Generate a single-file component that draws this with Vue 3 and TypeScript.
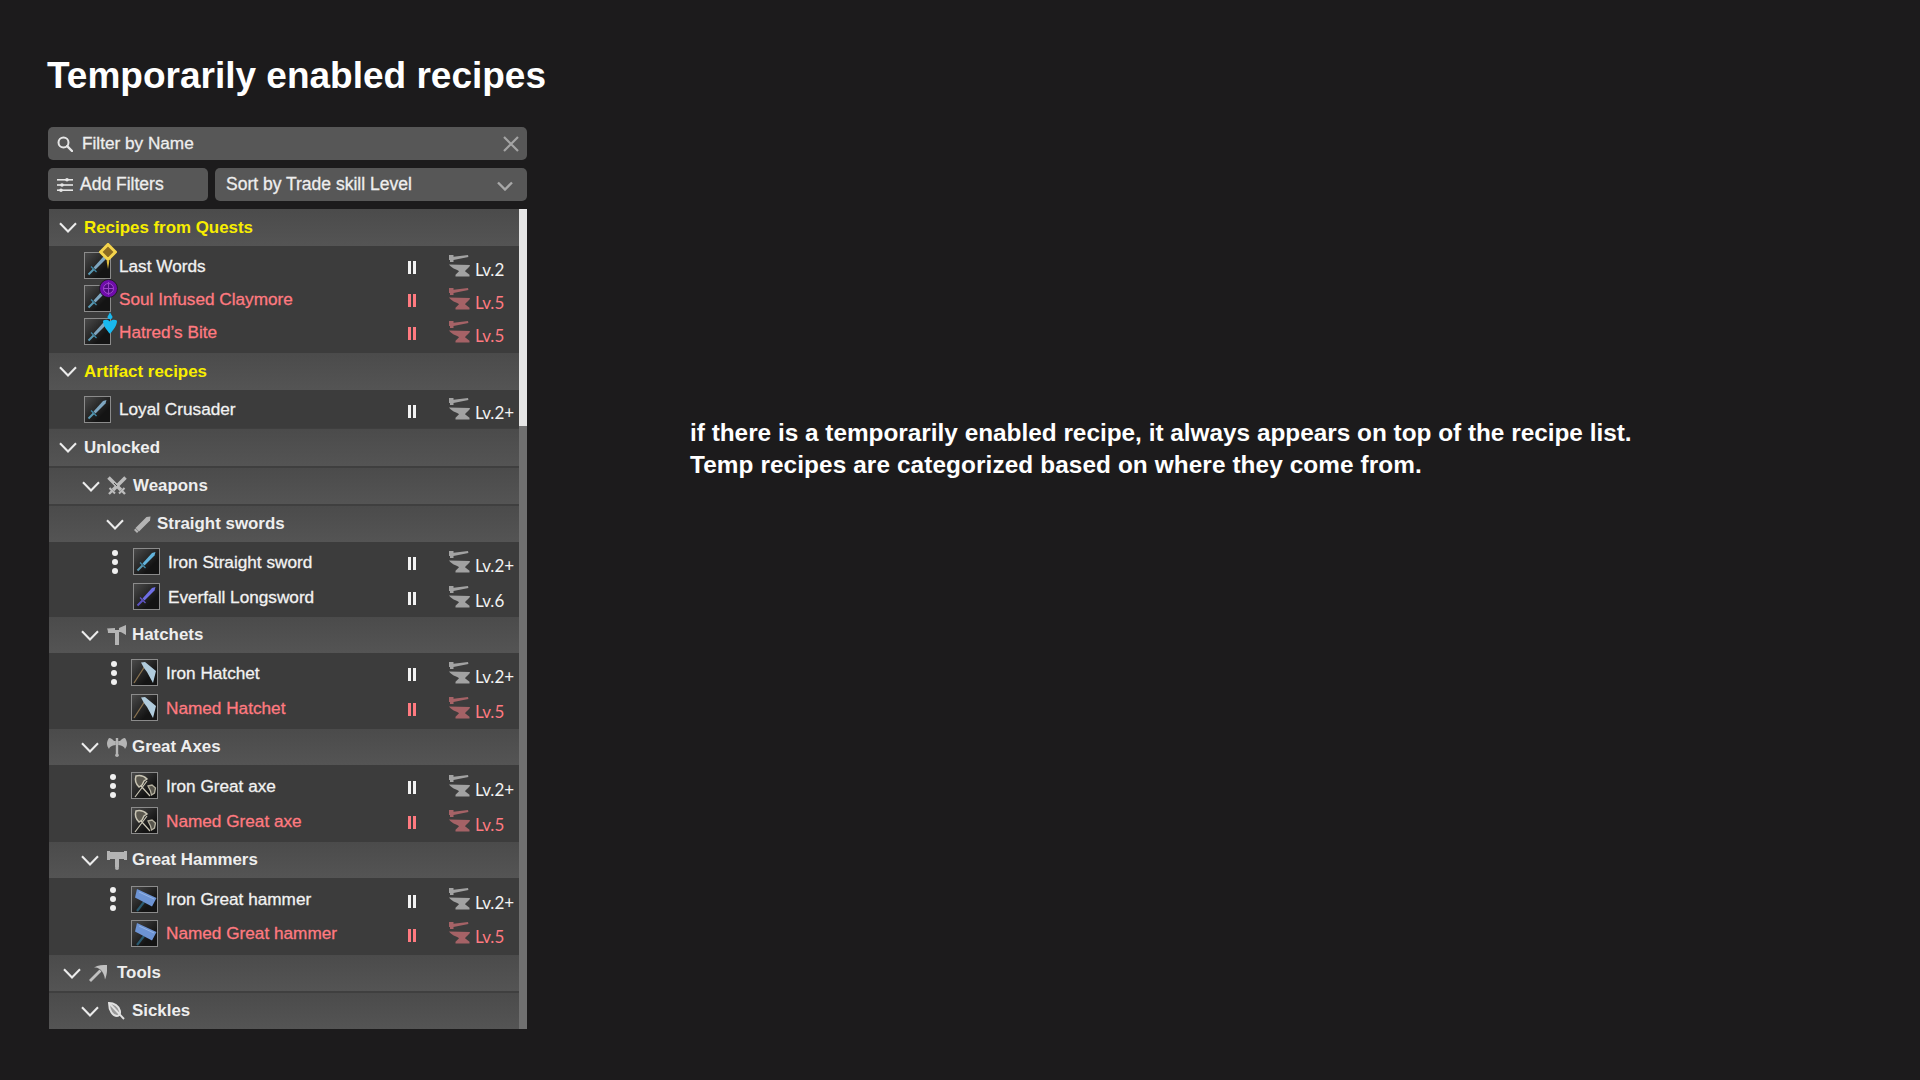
<script setup lang="ts">
type Tone = 'ok' | 'bad'
interface Row { name: string; tone: Tone; lv: string; thumb: string; badge?: string; dots?: boolean }
interface Block { kind: 'head' | 'items'; label?: string; cls: string; icon?: string; yellow?: boolean; rows?: Row[] }

const blocks: Block[] = [
  { kind: 'head', label: 'Recipes from Quests', cls: 'h0', yellow: true },
  { kind: 'items', cls: 'g-quest', rows: [
    { name: 'Last Words', tone: 'ok', lv: 'Lv.2', thumb: 'sword', badge: 'diamond' },
    { name: 'Soul Infused Claymore', tone: 'bad', lv: 'Lv.5', thumb: 'sword', badge: 'orb' },
    { name: 'Hatred’s Bite', tone: 'bad', lv: 'Lv.5', thumb: 'sword', badge: 'heart' },
  ] },
  { kind: 'head', label: 'Artifact recipes', cls: 'h0', yellow: true },
  { kind: 'items', cls: 'g-art', rows: [
    { name: 'Loyal Crusader', tone: 'ok', lv: 'Lv.2+', thumb: 'sword' },
  ] },
  { kind: 'head', label: 'Unlocked', cls: 'h0 h-tall sep' },
  { kind: 'head', label: 'Weapons', cls: 'h-weapons sep', icon: 'weapons' },
  { kind: 'head', label: 'Straight swords', cls: 'h-sword', icon: 'blade' },
  { kind: 'items', cls: 'g-sword', rows: [
    { name: 'Iron Straight sword', tone: 'ok', lv: 'Lv.2+', thumb: 'iron', dots: true },
    { name: 'Everfall Longsword', tone: 'ok', lv: 'Lv.6', thumb: 'violet' },
  ] },
  { kind: 'head', label: 'Hatchets', cls: 'h-sub', icon: 'hatchet' },
  { kind: 'items', cls: 'g-hatchet', rows: [
    { name: 'Iron Hatchet', tone: 'ok', lv: 'Lv.2+', thumb: 'hatchet', dots: true },
    { name: 'Named Hatchet', tone: 'bad', lv: 'Lv.5', thumb: 'hatchet' },
  ] },
  { kind: 'head', label: 'Great Axes', cls: 'h-sub', icon: 'axe' },
  { kind: 'items', cls: 'g-axe', rows: [
    { name: 'Iron Great axe', tone: 'ok', lv: 'Lv.2+', thumb: 'axe', dots: true },
    { name: 'Named Great axe', tone: 'bad', lv: 'Lv.5', thumb: 'axe' },
  ] },
  { kind: 'head', label: 'Great Hammers', cls: 'h-sub', icon: 'hammer' },
  { kind: 'items', cls: 'g-hammer', rows: [
    { name: 'Iron Great hammer', tone: 'ok', lv: 'Lv.2+', thumb: 'hammer', dots: true },
    { name: 'Named Great hammer', tone: 'bad', lv: 'Lv.5', thumb: 'hammer' },
  ] },
  { kind: 'head', label: 'Tools', cls: 'h-tools sep', icon: 'pick' },
  { kind: 'head', label: 'Sickles', cls: 'h-sub', icon: 'sickle' },
]
</script>

<template>
  <div class="page">
    <section class="left">
      <h1 class="title">Temporarily enabled recipes</h1>
      <div class="search">
        <svg class="search-ico" viewBox="0 0 16 16" fill="none" stroke="#e6e6e6" stroke-width="2"><circle cx="6.500" cy="6.500" r="5" /><path d="M10.200 10.200 15 15" stroke-linecap="round" stroke-width="2.400" /></svg>
        <span class="search-text">Filter by Name</span>
        <svg class="close-ico" viewBox="0 0 16 16" fill="none" stroke="#a4a4a4" stroke-width="2.200"><path d="M1 1l14 14M15 1 1 15" /></svg>
      </div>
      <div class="tools">
        <div class="btn filters">
          <svg class="filter-ico" viewBox="0 0 16 14" fill="#e6e6e6"><rect y="1" width="16" height="1.600" /><rect y="6.200" width="16" height="1.600" /><rect y="11.400" width="16" height="1.600" /><circle cx="10" cy="1.800" r="1.800" /><circle cx="5" cy="7" r="1.800" /><circle cx="4" cy="12.200" r="1.800" /></svg>
          <span>Add Filters</span>
        </div>
        <div class="btn sort">
          <span>Sort by Trade skill Level</span>
          <svg class="sort-ico" viewBox="0 0 16 10" fill="none" stroke="#a8a8a8" stroke-width="2.400"><path d="M1 1.500 8 8.500 15 1.500" /></svg>
        </div>
      </div>
      <div class="list">
        <div class="content">
          <template v-for="(b, i) in blocks" :key="i">
            <div v-if="b.kind === 'head'" class="head" :class="b.cls">
              <svg class="chev" viewBox="0 0 18 11" fill="none" stroke="#ececec" stroke-width="2.100"><path d="M1 1.200 9 9.400 17 1.200" /></svg>
              <span v-if="b.icon" class="head-ico">
                <svg v-if="b.icon === 'weapons'" viewBox="0 0 20 20" width="20" height="20" fill="none" stroke="#bcbcbc"><path d="M18.500 1.500 6 14" stroke-width="3.600" /><path d="M1.500 1.500 14 14" stroke-width="3.600" /><path d="M2.500 12 8 17.500M17.500 12 12 17.500" stroke-width="2" /><path d="M5 15 2 18M15 15l3 3" stroke-width="2.400" /><path d="M10 10 7 7" stroke="#4f4f4f" stroke-width="1" /></svg>
                <svg v-else-if="b.icon === 'blade'" viewBox="0 0 17 17" width="17" height="17" fill="#b4b4b4"><path d="M16.500.5 16 4.500 5 15.500 1.500 12 12.500 1z" /><path d="M0 14l3 3 1.500-1.500-3-3z" /></svg>
                <svg v-else-if="b.icon === 'hatchet'" viewBox="0 0 20 20" width="20" height="20" fill="#b4b4b4"><path d="M8 5h4v15H8z" /><path d="M0 3.500 8 3v5L1 8c0-2-.3-3-1-4.500z" /><path d="M12 3l7-3v10l-3-1.800c-1-.8-2.500-1.200-4-1.200z" /></svg>
                <svg v-else-if="b.icon === 'axe'" viewBox="0 0 20 20" width="20" height="20" fill="#b4b4b4"><path d="M8.800 1h2.400v17h-2.400z" /><circle cx="10" cy="18.200" r="1.800" /><path d="M8.800 4H7C6 2.500 4 1 2 1 .6 3 0 5 0 6.500c0 2.500 1 4 2 5.500.5-2 2.500-3.500 6.800-4zM11.200 4H13c1-1.500 3-3 5-3 1.400 2 2 4 2 5.500 0 2.500-1 4-2 5.500-.5-2-2.500-3.500-6.800-4z" /></svg>
                <svg v-else-if="b.icon === 'hammer'" viewBox="0 0 20 20" width="20" height="20" fill="#b4b4b4"><path d="M0 1h3v1h14V1h3v9h-3V9H12v8H8V9H3v1H0z" /><circle cx="10" cy="18" r="2" /></svg>
                <svg v-else-if="b.icon === 'pick'" viewBox="0 0 18 17" width="18" height="17" fill="#c0c0c0"><path d="M2 17 0 15 10.500 4.500 12.500 6.500z" /><path d="M5 2.500C9 0 14 0 18 0c.3 5 0 10-2 14.500-.6-4.500-2-7.500-5-10.200C9 2.800 7.500 2.500 5 2.500z" /></svg>
                <svg v-else viewBox="0 0 18 18" width="18" height="18" fill="none" stroke="#e2e2e2" stroke-width="1.900"><path d="M2 1c5 0 10 3 11 8 .6 3-1 5-3 5C6 14 2 9 2 1z" fill="#9a9a9a" /><path d="M3 2l14 15" /></svg>
              </span>
              <span class="head-label" :class="{ yellow: b.yellow }">{{ b.label }}</span>
            </div>
            <div v-else class="items" :class="b.cls">
              <div v-for="r in b.rows" :key="r.name" class="row" :class="r.tone">
                <span class="dots-slot"><span v-if="r.dots" class="dots"><i /><i /><i /></span></span>
                <span class="thumb">
                  <svg viewBox="0 0 25 25" width="25" height="25">
                    <template v-if="r.thumb === 'sword' || r.thumb === 'iron' || r.thumb === 'violet'">
                      <path d="M21.500 3 20.500 6.500 10.500 16.500 8.500 14.500 18 4z" :fill="r.thumb === 'violet' ? '#6f6fe6' : r.thumb === 'iron' ? '#62b4dc' : '#7ea6c0'" />
                      <path d="M6 13.500 11.500 19" :stroke="r.thumb === 'violet' ? '#6357c8' : '#3f8aa8'" stroke-width="1.300" />
                      <path d="M8.500 16.500 3.500 21.500" :stroke="r.thumb === 'violet' ? '#5d52c4' : '#5a9ab4'" stroke-width="2" />
                    </template>
                    <template v-else-if="r.thumb === 'hatchet'">
                      <path d="M2 23 13 6" stroke="#8a7350" stroke-width="1.300" />
                      <path d="M9 2.500l4-.5 11 9-3 12-6-11-3-4z" fill="#b0cbdc" />
                    </template>
                    <template v-else-if="r.thumb === 'axe'">
                      <path d="M3 24 15 8M9 13l9 10" stroke="#c9c5b4" stroke-width="1.200" fill="none" />
                      <path d="M4 3c4-1 8 0 11 3l-3 2-2 4-3 2C3 10 3 6 4 3z" fill="#5a574e" stroke="#c9c5b4" stroke-width="1.500" />
                      <path d="M16 13l4-1 3.500 3-1 5-3 2-1-4z" fill="#55534a" stroke="#b5b1a0" stroke-width="1.300" />
                    </template>
                    <template v-else>
                      <path d="M12 15 5 24" stroke="#2a5a70" stroke-width="2.200" />
                      <path d="M5 2l19.500 9L20 19.500 3 10.500z" fill="#6d94d4" />
                      <path d="M7 5l15 7" stroke="#94b4e6" stroke-width="1" />
                    </template>
                  </svg>
                  <svg v-if="r.badge === 'diamond'" class="badge" viewBox="0 0 18 26" width="18" height="26">
                    <path d="M9 1.500 16.500 9 9 16.500 1.500 9z" fill="#8a6a22" stroke="#f4d44c" stroke-width="3" />
                    <path d="M7.800 17h2.400v2l-1.200 7-1.200-7z" fill="#e0bc3c" />
                  </svg>
                  <svg v-else-if="r.badge === 'orb'" class="badge orb" viewBox="0 0 19 19" width="19" height="19">
                    <circle cx="9.500" cy="9.500" r="9" fill="#6f0caa" stroke="#161616" stroke-width=".8" />
                    <circle cx="9.500" cy="9.500" r="5" fill="#4e0a80" stroke="#a048d0" stroke-width="1" />
                    <path d="M9.500 3v13M4 9.500h11" stroke="#9a42c8" stroke-width="1" />
                  </svg>
                  <svg v-else-if="r.badge === 'heart'" class="badge heart" viewBox="0 0 15 23" width="14" height="22">
                    <path d="M7.500 0 10 4.500c.6 1.800-1 3-2.500 3S4.400 6.300 5 4.500z" fill="#19b8ee" />
                    <path d="M0 9c2-1.500 5.500-1.500 7.500 1C9.500 7.500 13 7.500 15 9c0 5-4 10-7.500 14C4 19 0 14 0 9z" fill="#19b8ee" />
                  </svg>
                </span>
                <span class="name">{{ r.name }}</span>
                <span class="pause"><i /><i /></span>
                <svg class="anvil" viewBox="0 0 22 22" width="22" height="22">
                  <path d="M0 0h4.500v1.800L19 0l.4 2-14.900 2.900V7H1V5H0z" />
                  <path d="M0 9.500 21 10l-.5 1.500c-1.500 1.800-3.500 3-4.500 4.700l4.500 3.600V21.500H6.500v-1.700l3.500-3.600c-.5-1-2-1.200-3.500-2C4 13.500 1.500 11.500 0 9.500z" />
                </svg>
                <span class="lv">{{ r.lv }}</span>
              </div>
            </div>
          </template>
        </div>
        <div class="scrollbar"><div class="scroll-thumb"></div></div>
      </div>
    </section>
    <p class="note">if there is a temporarily enabled recipe, it always appears on top of the recipe list.<br /><span class="note-two">Temp recipes are categorized based on where they come from.</span></p>
  </div>
</template>

<style>
html, body { margin: 0; background: #1c1b1c; }
</style>

<style scoped>
.page {
  width: 1920px;
  height: 1080px;
  display: flex;
  background: #1c1b1c;
  color: #fff;
  font-family: "Liberation Sans", Arial, sans-serif;
  overflow: hidden;
}
.left { width: 479px; margin-left: 47px; padding-top: 52px; }
.title {
  margin: 0 0 28px;
  font-size: 37px;
  line-height: 47px;
  font-weight: 700;
  color: #fff;
  white-space: nowrap;
}
.search, .btn {
  background: #575757;
  border-radius: 5px;
  height: 33px;
  display: flex;
  align-items: center;
  color: #eee;
  -webkit-text-stroke: 0.3px currentColor;
  white-space: nowrap;
}
.search { margin-left: 1px; width: 479px; padding: 0 8px 0 9px; box-sizing: border-box; font-size: 17.2px; }
.btn { font-size: 17.5px; }
.search-ico { width: 16px; height: 16px; margin-right: 9px; }
.search-text { flex: 1; }
.close-ico { width: 16px; height: 16px; }
.tools { display: flex; gap: 7px; margin: 8px 0 8px 1px; width: 479px; }
.filters { width: 160px; padding-left: 9px; box-sizing: border-box; }
.filter-ico { width: 16px; height: 14px; margin-right: 7px; }
.sort { flex: 1; padding: 0 14px 0 11px; justify-content: space-between; }
.sort-ico { width: 16px; height: 10px; margin-top: 3px; }
.list { margin-left: 2px; width: 478px; height: 820px; display: flex; }
.content { width: 470px; background: #3f3f3f; }
.scrollbar { width: 8px; background: #707070; }
.scroll-thumb { height: 217px; background: #e5e5e5; }
.head {
  height: 37px;
  display: flex;
  align-items: center;
  background: linear-gradient(#4b4b4b, #545454);
  font-size: 16.9px;
  font-weight: 700;
  color: #eee;
  box-sizing: border-box;
  white-space: nowrap;
}
.head.h-tall { height: 37px; margin-top: 1px; }
.head.sep { margin-bottom: 2px; }
.yellow { color: #f8ee00; }
.chev { width: 18px; height: 11px; flex: none; }
.h0 { padding-left: 10px; }
.h0 .chev { margin-right: 7px; }
.h-weapons { padding-left: 33px; height: 36px; }
.h-weapons .chev { margin-right: 7px; }
.h-weapons .head-ico { width: 26px; }
.h-sword { padding-left: 57px; height: 36px; }
.h-sword .chev { margin-right: 10px; }
.h-sword .head-ico { width: 23px; }
.h-sub { padding-left: 32px; height: 36px; }
.h-sub .chev { margin-right: 8px; }
.h-sub .head-ico { width: 25px; }
.h-tools { padding-left: 14px; height: 36px; }
.h-tools .chev { margin-right: 8px; }
.h-tools .head-ico { width: 28px; }
.head-ico { display: flex; align-items: center; height: 20px; flex: none; }
.items { background: #3c3c3c; }
.row {
  display: flex;
  align-items: center;
  font-size: 17.2px;
  -webkit-text-stroke: 0.3px currentColor;
}
.row.ok { color: #f2f2f2; }
.row.bad { color: #ff7a80; }
.g-quest { padding: 3px 0 5px; }
.g-quest .row { height: 33px; padding-left: 35px; }
.g-quest .dots-slot { display: none; }
.g-art { padding: 2px 0; }
.g-art .row { height: 34px; padding-left: 35px; }
.g-art .dots-slot { display: none; }
.g-sword { padding: 2px 0 3px; }
.g-sword .row { height: 35px; padding-left: 63px; }
.g-hatchet { padding: 2px 0 4px; }
.g-hatchet .row { height: 35px; padding-left: 62px; }
.g-axe { padding: 3px 0 4px; }
.g-axe .row { height: 35px; padding-left: 61px; }
.g-hammer { padding: 4px 0 5px; }
.g-hammer .row { height: 34px; padding-left: 61px; }
.dots-slot { width: 21px; flex: none; }
.g-hatchet .dots-slot { width: 20px; }
.g-axe .dots-slot, .g-hammer .dots-slot { width: 21px; }
.dots { display: flex; flex-direction: column; gap: 3px; width: 6px; }
.dots i { display: block; width: 6px; height: 6px; border-radius: 50%; background: #f0f0f0; }
.thumb {
  position: relative;
  width: 25px;
  height: 25px;
  flex: none;
  border: 1px solid #8b8b8b;
  background: linear-gradient(135deg, #4a4a4a, #141414 70%);
  margin-right: 8px;
}
.thumb > svg:first-child { display: block; }
.badge { position: absolute; left: 14px; top: -10px; }
.badge.orb { top: -7px; left: 14px; }
.badge.heart { left: 18px; top: -7px; }
.name { flex: 1; white-space: nowrap; padding-top: 1px; }
.pause { display: flex; gap: 2px; margin-top: 4px; margin-right: 33px; }
.pause i { display: block; width: 3px; height: 13px; background: currentColor; }
.anvil { width: 22px; height: 22px; margin-right: 4px; }
.ok .anvil { fill: #a2a2a2; }
.bad .anvil { fill: #a56266; }
.lv {
  width: 44px;
  margin-top: 7px;
  font-family: Lato, "Liberation Sans", sans-serif;
  font-size: 17px;
  -webkit-text-stroke: 0;
  white-space: nowrap;
}
.note {
  margin: 417px 0 0 164px;
  font-size: 24.35px;
  line-height: 32px;
  font-weight: 700;
  color: #fff;
  white-space: nowrap;
  height: 64px;
}
.note-two { letter-spacing: 0.1px; }
</style>
